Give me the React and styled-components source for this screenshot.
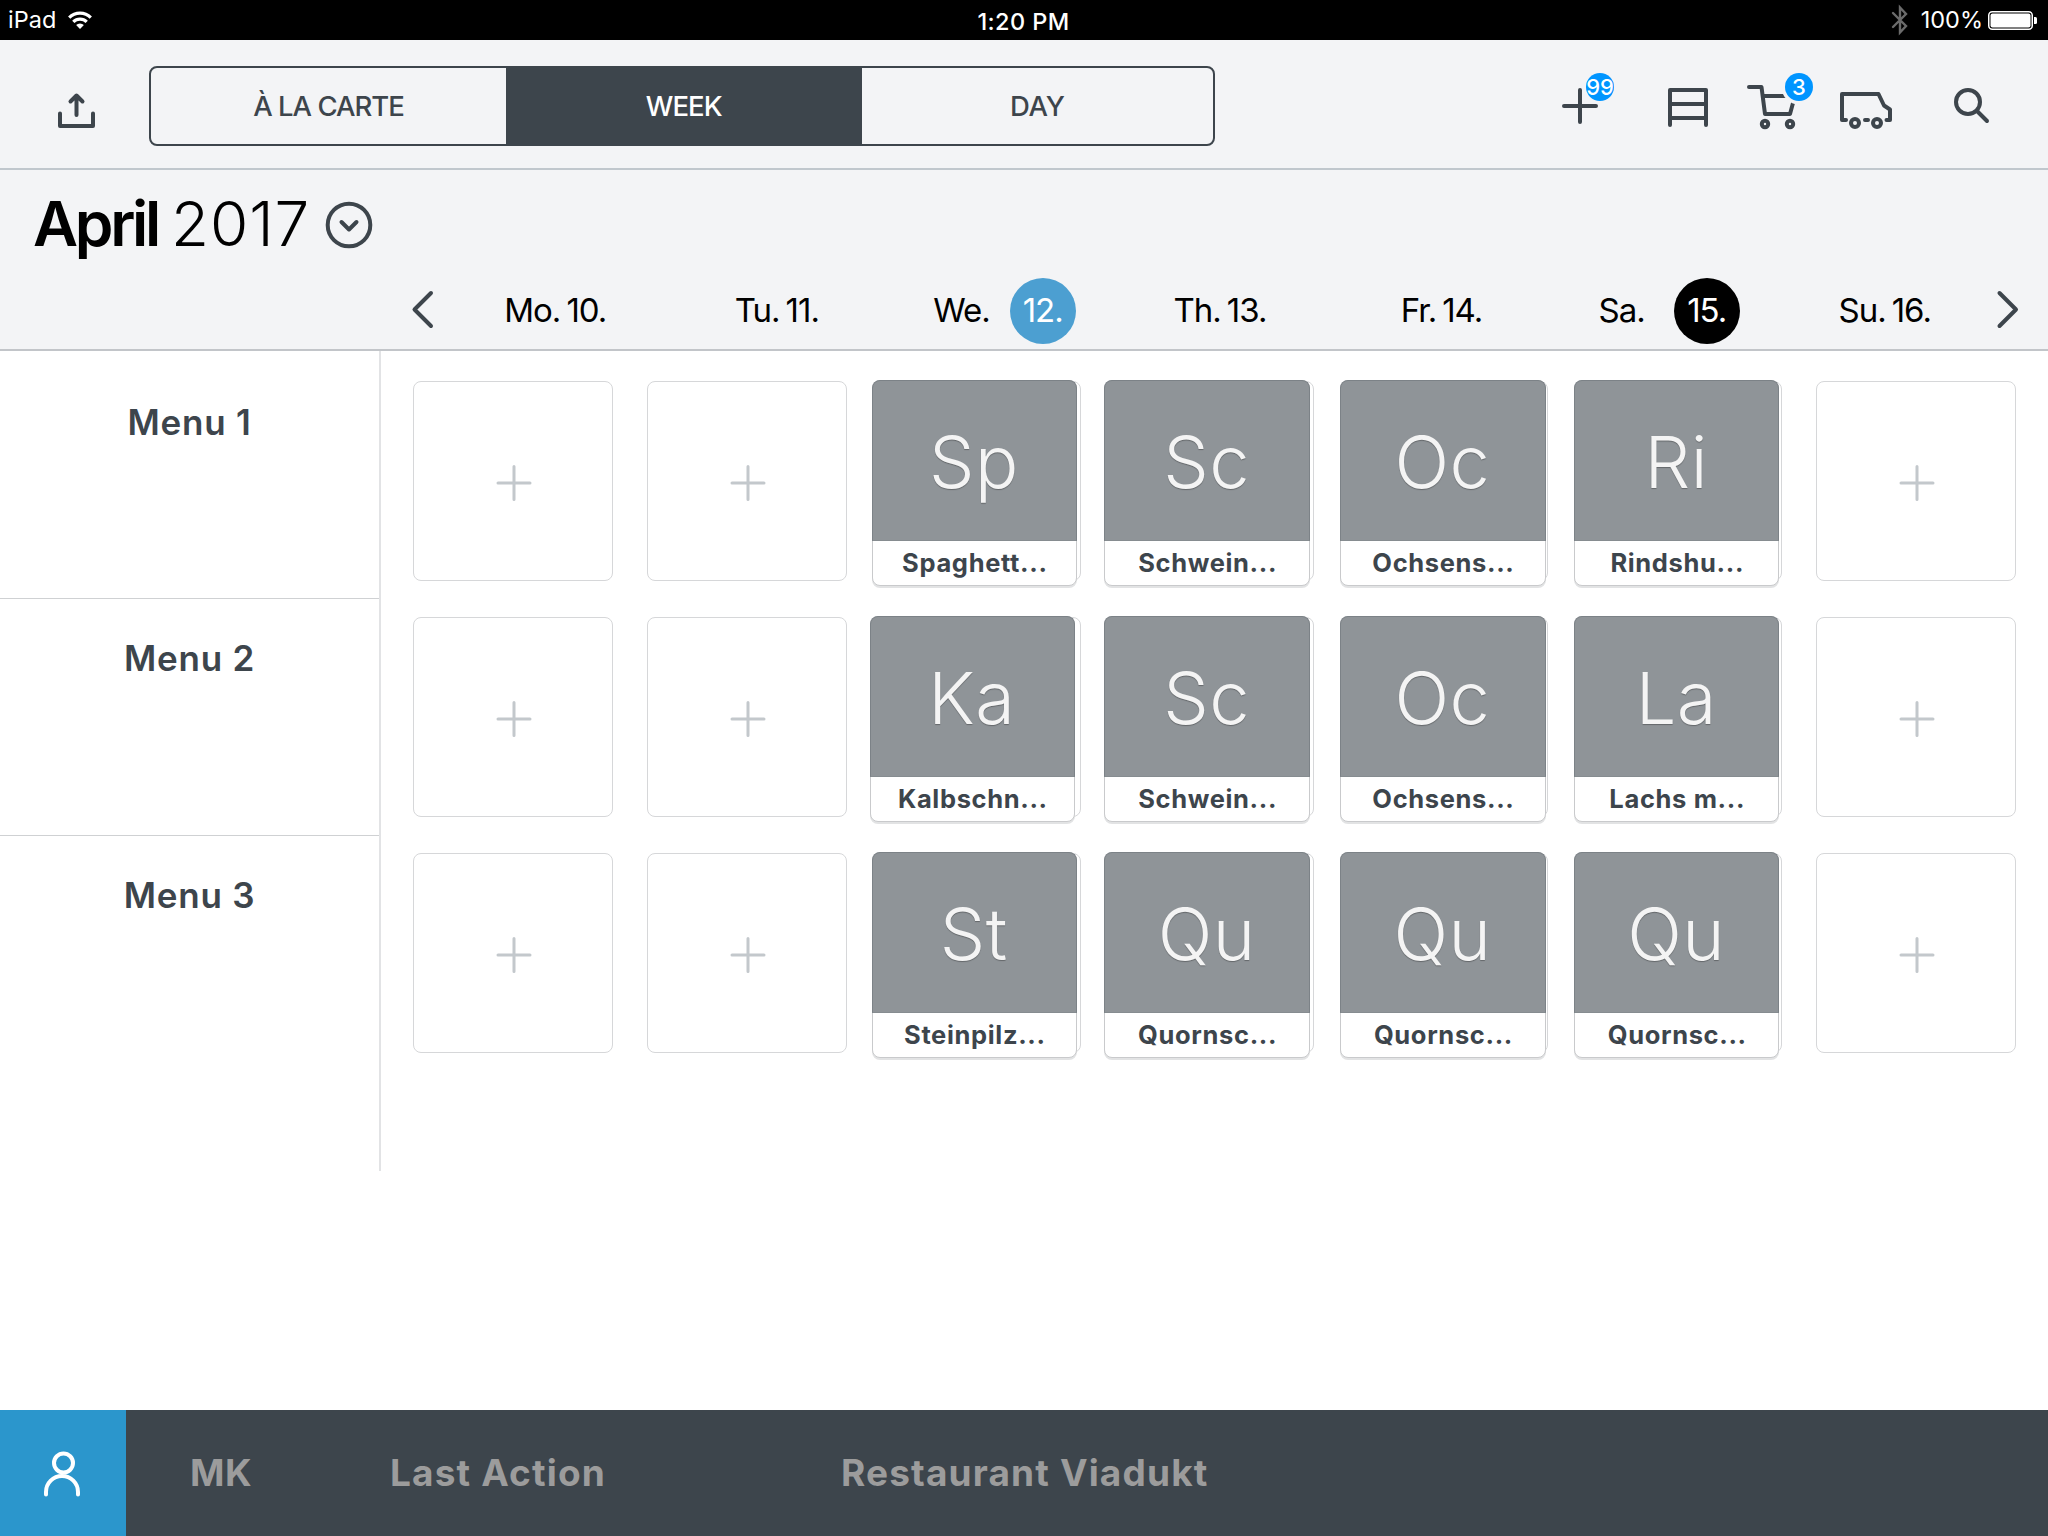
import React from "react";
import styled, { createGlobalStyle } from "styled-components";

const ink = "#3d454c";

const GlobalStyle = createGlobalStyle`
  * { box-sizing: border-box; }
  html, body { margin: 0; padding: 0; background: #ffffff; }
  body {
    width: 2048px;
    height: 1536px;
    overflow: hidden;
    font-family: Inter, "Liberation Sans", sans-serif;
    color: ${ink};
  }
  svg { display: block; overflow: visible; fill: none; stroke-linecap: round; stroke-linejoin: round; }
`;

const Screen = styled.div`
  display: flex;
  flex-direction: column;
  width: 2048px;
  height: 1536px;
  background: #ffffff;
`;

const Label = styled.span`
  white-space: nowrap;
  letter-spacing: ${(p) => p.$track || 0}px;
`;

/* Status bar */
const StatusBar = styled.header`
  display: grid;
  grid-template-columns: 1fr auto 1fr;
  align-items: center;
  height: 40px;
  padding: 0 11px 0 8px;
  background: #000000;
  color: #ffffff;
  font-size: 23.5px;
`;
const StatusLeft = styled.div`
  display: flex;
  align-items: center;
  gap: 12px;
  padding-bottom: 1px;
`;
const StatusTime = styled.div`
  font-weight: 500;
  padding: 3px 0 0 2px;
`;
const StatusRight = styled.div`
  display: flex;
  align-items: center;
  justify-content: flex-end;
  gap: 6px;
`;
const Bluetooth = styled.svg`
  margin-right: 7px;
`;
const Charge = styled.div`
  padding-bottom: 1px;
  margin-right: -1px;
`;

/* Toolbar */
const Toolbar = styled.nav`
  display: flex;
  align-items: center;
  height: 130px;
  padding: 0 40px 0 47px;
  background: #f3f4f6;
  border-bottom: 2px solid #c0c7cd;
`;
const Segments = styled.div`
  display: grid;
  grid-template-columns: 355px 355.5px 1fr;
  width: 1066px;
  height: 80px;
  margin: 4px auto 0 42px;
  border: 2px solid ${ink};
  border-radius: 8px;
  overflow: hidden;
`;
const Segment = styled.button`
  display: flex;
  align-items: center;
  justify-content: center;
  border: 0;
  padding: 0;
  font: 550 27.5px Inter, sans-serif;
  color: ${(p) => (p.$active ? "#ffffff" : ink)};
  background: ${(p) => (p.$active ? ink : "transparent")};
`;
const IconButton = styled.div`
  position: relative;
  width: 60px;
  height: 60px;
  margin-left: ${(p) => p.$gap || 0}px;
  flex: none;
  stroke: ${ink};
  stroke-width: 4;
`;
const Badge = styled.span`
  position: absolute;
  left: ${(p) => p.$left}px;
  top: -1px;
  width: 28px;
  height: 28px;
  display: flex;
  align-items: center;
  justify-content: center;
  border-radius: 50%;
  background: #0095ff;
  box-shadow: 0 0 0 ${(p) => p.$ring || 0}px #f3f4f6;
  color: #ffffff;
  font-size: 22px;
  font-weight: 500;
  padding-bottom: 1px;
`;

/* Calendar header */
const CalendarHeader = styled.section`
  height: 181px;
  background: #f3f4f6;
  border-bottom: 2px solid #c2c5c9;
  color: #000000;
`;
const MonthRow = styled.div`
  display: flex;
  align-items: center;
  height: 108px;
  padding-left: 33px;
  font-size: 62px;
`;
const Month = styled.strong`
  font-weight: 600;
  width: 138px;
  padding-bottom: 1px;
  letter-spacing: -3.3px;
`;
const Year = styled.span`
  font-weight: 300;
  width: 154px;
  padding-bottom: 1px;
  letter-spacing: 0.9px;
`;
const DayRow = styled.div`
  display: grid;
  grid-template-columns: 32px 1551px 32px;
  align-items: center;
  height: 66px;
  padding-left: 412.5px;
  stroke: ${ink};
  stroke-width: 4;
`;
const Chevron = styled.svg`
  margin-top: -3px;
`;
const Days = styled.div`
  display: grid;
  grid-template-columns: repeat(7, 1fr);
  stroke: none;
`;
const Day = styled.div`
  display: flex;
  align-items: center;
  justify-content: center;
  height: 66px;
  padding-left: ${(p) => (p.$marked ? 12 : 0)}px;
  gap: ${(p) => (p.$marked ? p.$space : 6)}px;
  font-size: 33px;
  line-height: 64px;

  > span { padding-bottom: 2px; }
`;
const DayNumber = styled.span`
  display: flex;
  align-items: center;
  justify-content: center;
  width: ${(p) => (p.$fill ? "66px" : "auto")};
  height: 66px;
  border-radius: 50%;
  background: ${(p) => p.$fill || "transparent"};
  color: ${(p) => (p.$fill ? "#ffffff" : "inherit")};
`;

/* Planner */
const Planner = styled.main`
  display: flex;
  height: 1059px;
`;
const MenuColumn = styled.aside`
  width: 381px;
  height: 820px;
  border-right: 2px solid #e2e3e5;
`;
const MenuHead = styled.div`
  height: ${(p) => p.$height}px;
  padding-top: ${(p) => p.$top}px;
  border-bottom: ${(p) => (p.$last ? "0" : "1px solid #cfd1d3")};
  text-align: center;
  font-size: 35px;
  font-weight: 600;
  line-height: 40px;
`;
const Board = styled.div`
  display: grid;
  grid-template-columns: repeat(7, 200px);
  grid-auto-rows: 200px;
  column-gap: 33.8px;
  row-gap: 36px;
  padding: 30px 0 0 32px;
`;
const Slot = styled.div`
  position: relative;
  border: 1px solid #d6d7d9;
  border-radius: 8px;
  padding: 83px 0 0 83px;
  stroke: #c3c8cc;
  stroke-width: 3;
`;
const Dish = styled.article`
  position: absolute;
  left: ${(p) => p.$shift - 1}px;
  top: -2px;
  width: 205.5px;
  height: 206px;
  display: flex;
  flex-direction: column;
  border-radius: 8px;
  background: #ffffff;
  border: 1px solid #c9cacc;
  box-shadow: 0 2px 0 #e2e3e4;
`;
const DishThumb = styled.div`
  height: 161px;
  margin: -1px -1px 0;
  display: flex;
  align-items: center;
  justify-content: center;
  padding: 2px 1px 0 0;
  border: 1px solid #7c8287;
  border-bottom-color: #868c90;
  border-radius: 8px 8px 0 0;
  background: #8f9498;
  color: #f4f4f4;
  font-size: 72px;
  font-weight: 300;
  text-shadow: 0 1px 1px rgba(0, 0, 0, 0.3);
`;
const DishName = styled.div`
  flex: 1;
  display: flex;
  align-items: center;
  justify-content: center;
  padding: 0 0 2px 1px;
  font-size: 25.5px;
  font-weight: 700;
`;

/* Footer */
const Footer = styled.footer`
  display: flex;
  align-items: center;
  height: 126px;
  background: ${ink};
  color: #9c9c9c;
  font-size: 37px;
  font-weight: 700;
`;
const UserButton = styled.div`
  display: flex;
  align-items: center;
  justify-content: center;
  width: 126px;
  height: 126px;
  margin-right: 64px;
  background: #2b96cc;
  stroke: #ffffff;
  stroke-width: 4;
`;
const FooterItem = styled.div`
  width: ${(p) => p.$width}px;
  padding-bottom: 2px;
`;

const days = [
  { name: "Mo.", num: "10." },
  { name: "Tu.", num: "11." },
  { name: "We.", num: "12.", fill: "#4c9fd1", space: 20 },
  { name: "Th.", num: "13." },
  { name: "Fr.", num: "14." },
  { name: "Sa.", num: "15.", fill: "#000000", space: 29 },
  { name: "Su.", num: "16." },
];

const menus = [
  { title: "Menu 1", height: 248, top: 51, dishes: ["Spaghett...", "Schwein...", "Ochsens...", "Rindshu..."], shifts: [-9, -10, -8, -8] },
  { title: "Menu 2", height: 237, top: 39, dishes: ["Kalbschn...", "Schwein...", "Ochsens...", "Lachs m..."], shifts: [-11, -10, -8, -8] },
  { title: "Menu 3", height: 335, top: 39, dishes: ["Steinpilz...", "Quornsc...", "Quornsc...", "Quornsc..."], shifts: [-9, -10, -8, -8] },
];

const cells = menus.flatMap((menu) =>
  days.map((_, day) => {
    const i = day - 2;
    return { key: menu.title + day, dish: menu.dishes[i], shift: menu.shifts[i] };
  })
);

export default function App() {
  return (
    <Screen>
      <GlobalStyle />
      <StatusBar>
        <StatusLeft>
          <Label>iPad</Label>
          <svg width="24" height="18" viewBox="0 0 24 18" stroke="#fff" strokeWidth="3.2">
            <path d="M1.2 6.6a15.3 15.3 0 0 1 21.6 0" strokeLinecap="butt" />
            <path d="M5.3 10.9a9.5 9.5 0 0 1 13.4 0" strokeLinecap="butt" />
            <path d="M12 18l-3.9-4a5.5 5.5 0 0 1 7.8 0z" fill="#fff" stroke="none" />
          </svg>
        </StatusLeft>
        <StatusTime><Label $track={0.4}>1:20 PM</Label></StatusTime>
        <StatusRight>
          <Bluetooth width="16" height="28" viewBox="0 0 16 28" stroke="#6b6b6b" strokeWidth="2.4">
            <path d="M1 7l13 13-6 6.5v-25L14 8 1 21" strokeLinejoin="miter" />
          </Bluetooth>
          <Charge><Label>100%</Label></Charge>
          <svg width="49" height="19" viewBox="0 0 49 19">
            <rect x=".75" y=".75" width="43.5" height="17.5" rx="3.5" stroke="#fff" strokeWidth="1.5" />
            <rect x="2.5" y="2.5" width="40" height="14" rx="2" fill="#fff" />
            <path d="M46 6h1.5q1.5 0 1.5 1.5v4q0 1.5-1.5 1.5H46z" fill="#fff" />
          </svg>
        </StatusRight>
      </StatusBar>

      <Toolbar>
        <IconButton>
          <svg width="60" height="60">
            <path d="M13 39.500V52h33V39.500M29.500 41V22M23.500 27.500l6-6 6 6" />
          </svg>
        </IconButton>
        <Segments>
          <Segment><Label $track={-1}>À LA CARTE</Label></Segment>
          <Segment $active><Label $track={-0.9}>WEEK</Label></Segment>
          <Segment><Label $track={-0.3}>DAY</Label></Segment>
        </Segments>
        <IconButton>
          <svg width="60" height="60"><path d="M30 16v32M14 32h32" /></svg>
          <Badge $left={36}><Label>99</Label></Badge>
        </IconButton>
        <IconButton $gap={48}>
          <svg width="60" height="60">
            <path d="M12 51V16h36v35M12 30h36M12 44h36" />
          </svg>
        </IconButton>
        <IconButton $gap={22}>
          <svg width="60" height="60">
            <path d="M9 13h12.500l3.500 27h25l3-11M23 22h30" />
            <circle cx="25" cy="50" r="3.200" />
            <circle cx="50" cy="50" r="3.200" />
          </svg>
          <Badge $left={45} $ring={3.5}><Label>3</Label></Badge>
        </IconButton>
        <IconButton $gap={36}>
          <svg width="60" height="60">
            <path d="M10 46H6V20h36.500l5.500 11.500 6 4V46h-3.500M29 46h3" />
            <circle cx="19" cy="49" r="4" />
            <circle cx="41" cy="49" r="4" />
          </svg>
        </IconButton>
        <IconButton $gap={52}>
          <svg width="60" height="60">
            <circle cx="20" cy="28" r="12" />
            <path d="M29 37l10 10" />
          </svg>
        </IconButton>
      </Toolbar>

      <CalendarHeader>
        <MonthRow>
          <Month>April</Month>
          <Year>2017</Year>
          <svg width="48" height="48" stroke={ink} strokeWidth="4">
            <circle cx="24" cy="25" r="21.300" />
            <path d="M16.500 22l7.500 7.500 7.500-7.500" />
          </svg>
        </MonthRow>
        <DayRow>
          <Chevron width="24" height="40"><path d="M18 3L1.500 19.500 18 36" /></Chevron>
          <Days>
            {days.map((d) => (
              <Day key={d.name} $marked={!!d.fill} $space={d.space}>
                <Label $track={-1}>{d.name}</Label>
                <DayNumber $fill={d.fill}><Label $track={-1}>{d.num}</Label></DayNumber>
              </Day>
            ))}
          </Days>
          <Chevron width="24" height="40"><path d="M3.500 3l16.500 16.500L3.500 36" /></Chevron>
        </DayRow>
      </CalendarHeader>

      <Planner>
        <MenuColumn>
          {menus.map((m, i) => (
            <MenuHead key={m.title} $height={m.height} $top={m.top} $last={i === 2}>
              <Label $track={0.8}>{m.title}</Label>
            </MenuHead>
          ))}
        </MenuColumn>
        <Board>
          {cells.map((c) => (
            <Slot key={c.key}>
              {c.dish ? (
                <Dish $shift={c.shift}>
                  <DishThumb><Label $track={0.5}>{c.dish.slice(0, 2)}</Label></DishThumb>
                  <DishName><Label $track={0.65}>{c.dish}</Label></DishName>
                </Dish>
              ) : (
                <svg width="36" height="36"><path d="M17 1.500v33M1 18h32" /></svg>
              )}
            </Slot>
          ))}
        </Board>
      </Planner>

      <Footer>
        <UserButton>
          <svg width="40" height="44">
            <circle cx="20.500" cy="12" r="9.500" />
            <path d="M3 43.500v-2.500a16 16 0 0 1 32 0v2.500" />
          </svg>
        </UserButton>
        <FooterItem $width={200}><Label $track={0.6}>MK</Label></FooterItem>
        <FooterItem $width={451}><Label $track={1.15}>Last Action</Label></FooterItem>
        <FooterItem $width={400}><Label $track={1.15}>Restaurant Viadukt</Label></FooterItem>
      </Footer>
    </Screen>
  );
}
